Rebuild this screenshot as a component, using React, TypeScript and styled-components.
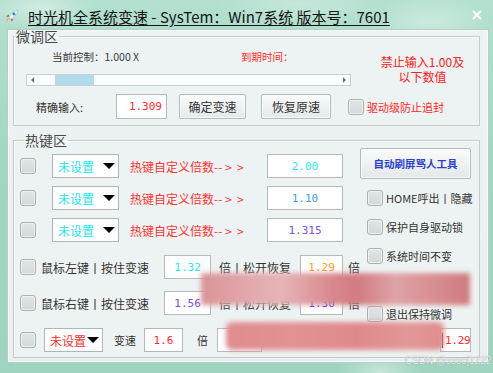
import React from "react";
import styled, { createGlobalStyle, css } from "styled-components";

const GlobalStyle = createGlobalStyle`
  html, body {
    margin: 0;
    padding: 0;
    width: 493px;
    height: 373px;
    overflow: hidden;
  }
  * {
    box-sizing: border-box;
  }
`;

const CJK = `"Noto Sans CJK SC", "Noto Sans", sans-serif`;
const MONO = `"DejaVu Sans Mono", "Liberation Mono", monospace`;

const App = () => {
  return (
    <Window>
      <GlobalStyle />
      <TitleBar>
        <AppIcon viewBox="0 0 16 16" width="14" height="14">
          <path d="M5.2 8.6 L1.6 9.2 L3.6 6.4 Z" fill="#e6393c" />
          <path d="M7.4 10.8 L6.8 14.4 L9.6 12.4 Z" fill="#e6393c" />
          <path d="M4.6 11.4 L1.2 14.8 L2.6 10.6 Z" fill="#f4a21f" />
          <path
            d="M4.6 11.4 C5 7.5 9 2.2 14.6 1.4 C13.8 7 8.5 11 4.6 11.4 Z"
            fill="#f4fbff"
            stroke="#8cc0de"
            strokeWidth="0.8"
          />
          <circle cx="10.2" cy="5.8" r="1.7" fill="#2b86d2" />
        </AppIcon>
        <TitleText>时光机全系统变速 - SysTem：Win7系统 版本号：7601</TitleText>
        <CloseButton viewBox="0 0 10 10" width="10" height="10">
          <path d="M1 1 L9 9 M9 1 L1 9" stroke="#fff" strokeWidth="2" />
        </CloseButton>
      </TitleBar>

      <Panel>
        <Group>
          <GroupLabel $indent={1} $lh={10}>微调区</GroupLabel>
          <FineBody>
            <FineTop>
              <FineLeft>
                <InfoRow>
                  <InfoText $w={189}>当前控制：1.000 X</InfoText>
                  <InfoText $red>到期时间：</InfoText>
                </InfoRow>
                <ScrollTrack>
                  <ScrollEnd>
                    <Arrow $dir="left" />
                  </ScrollEnd>
                  <ScrollThumb />
                  <ScrollEnd $right>
                    <Arrow $dir="right" />
                  </ScrollEnd>
                </ScrollTrack>
              </FineLeft>
              <Warning>
                <span>禁止输入1.00及</span>
                <span>以下数值</span>
              </Warning>
            </FineTop>
            <ActionRow>
              <FieldLabel>精确输入:</FieldLabel>
              <NumBox $w={51} $h={25} $color="#ff2b2b" $right>
                1.309
              </NumBox>
              <PushButton $w={67} $ml={12}>确定变速</PushButton>
              <PushButton $w={70} $ml={15}>恢复原速</PushButton>
              <Check $ml={17} />
              <CheckLabel $red>驱动级防止追封</CheckLabel>
            </ActionRow>
          </FineBody>
        </Group>

        <Group $top={7}>
          <GroupLabel $indent={10} $lh={14}>热键区</GroupLabel>
          <HotBody>
            <HotGrid>
              <LeftCol>
                <HotRow>
                  <Check />
                  <Combo $w={67} $ml={16} $color="#1ee6ef">
                    未设置
                    <ComboArrow />
                  </Combo>
                  <RedText>热键自定义倍数--&nbsp;&gt;&nbsp;&nbsp;&gt;</RedText>
                  <NumBox $w={76} $h={24} $color="#2aeef4">2.00</NumBox>
                </HotRow>
                <HotRow>
                  <Check />
                  <Combo $w={67} $ml={16} $color="#1ee6ef">
                    未设置
                    <ComboArrow />
                  </Combo>
                  <RedText>热键自定义倍数--&nbsp;&gt;&nbsp;&nbsp;&gt;</RedText>
                  <NumBox $w={76} $h={24} $color="#3d9ff0">1.10</NumBox>
                </HotRow>
                <HotRow>
                  <Check />
                  <Combo $w={67} $ml={16} $color="#1ee6ef">
                    未设置
                    <ComboArrow />
                  </Combo>
                  <RedText>热键自定义倍数--&nbsp;&gt;&nbsp;&nbsp;&gt;</RedText>
                  <NumBox $w={76} $h={24} $color="#7458dc">1.315</NumBox>
                </HotRow>
                <MouseRow $first>
                  <Check />
                  <RowText $ml={5}>鼠标左键丨按住变速</RowText>
                  <NumBox $w={47} $h={24} $ml={15} $color="#1ee8f2">1.32</NumBox>
                  <RowText $ml={8}>倍丨松开恢复</RowText>
                  <NumBox $w={43} $h={24} $ml={9} $color="#ff9a26">1.29</NumBox>
                  <RowText $ml={5}>倍</RowText>
                </MouseRow>
                <MouseRow>
                  <Check />
                  <RowText $ml={5}>鼠标右键丨按住变速</RowText>
                  <NumBox $w={47} $h={24} $ml={15} $color="#6f4fe6">1.56</NumBox>
                  <RowText $ml={8}>倍丨松开恢复</RowText>
                  <NumBox $w={43} $h={24} $ml={9} $color="#2430ff">1.30</NumBox>
                  <RowText $ml={5}>倍</RowText>
                </MouseRow>
              </LeftCol>

              <RightCol>
                <ToolButton>自动刷屏骂人工具</ToolButton>
                <SideCheck $first>
                  <Check />
                  <CheckLabel>HOME呼出丨隐藏</CheckLabel>
                </SideCheck>
                <SideCheck>
                  <Check />
                  <CheckLabel>保护自身驱动锁</CheckLabel>
                </SideCheck>
                <SideCheck>
                  <Check />
                  <CheckLabel>系统时间不变</CheckLabel>
                </SideCheck>
                <SideCheck />
                <SideCheck>
                  <Check />
                  <CheckLabel>退出保持微调</CheckLabel>
                </SideCheck>
              </RightCol>
            </HotGrid>

            <BottomRow>
              <Check />
              <Combo $w={59} $ml={8} $color="#ff2b2b">
                未设置
                <ComboArrow />
              </Combo>
              <RowText $ml={11} $small>变速</RowText>
              <NumBox $w={39} $h={24} $ml={8} $color="#ff2b2b">1.6</NumBox>
              <RowText $ml={14} $small>倍</RowText>
              <NumBox $w={45} $h={24} $ml={9} $color="#ff2b2b" />
              <Spacer />
              <NumBox $w={31} $h={24} $color="#ff2b2b" $caret>
                1.29
              </NumBox>
            </BottomRow>
          </HotBody>
        </Group>
      </Panel>

      <Smudge $variant="upper" />
      <Smudge $variant="lower" />
      <Watermark>CSDN @sssej1222</Watermark>
    </Window>
  );
};

export default App;

const Window = styled.div`
  position: relative;
  width: 493px;
  height: 373px;
  overflow: hidden;
  font-family: ${CJK};
  color: #333;
  background:
    radial-gradient(ellipse 90px 40px at 430px 22px, rgba(255, 255, 255, 0.35), transparent 70%),
    radial-gradient(ellipse 120px 30px at 300px 4px, rgba(255, 255, 255, 0.25), transparent 70%),
    radial-gradient(ellipse 80px 30px at 40px 8px, rgba(255, 255, 255, 0.4), transparent 70%),
    radial-gradient(ellipse 60px 30px at 380px 372px, rgba(255, 255, 255, 0.4), transparent 70%),
    linear-gradient(180deg, #b3e0cf 0%, #a2d8c3 40%, #9fd5c0 100%);
`;

const TitleBar = styled.div`
  height: 30px;
  display: flex;
  align-items: center;
  padding: 2px 0 0 5px;
`;

const AppIcon = styled.svg`
  flex: none;
  margin-right: 9px;
`;

const TitleText = styled.div`
  font-size: 15px;
  line-height: 17px;
  color: #151515;
  text-decoration: underline;
  text-underline-offset: 2px;
  white-space: nowrap;
`;

const CloseButton = styled.svg`
  margin-left: auto;
  margin-right: 11px;
  margin-top: -2px;
`;

const Panel = styled.div`
  margin-left: 8px;
  width: 480px;
  height: 332px;
  padding: 0 7px 0 4px;
  background: linear-gradient(180deg, #edf3f2 0%, #e9f0ef 100%);
  border: 1px solid #f7fbfa;
  box-shadow: 0 0 0 1px #b7cdc6;
`;

const Group = styled.fieldset<{ $top?: number }>`
  margin: ${(p) => p.$top || 0}px 0 0 0;
  padding: 0;
  min-inline-size: 0;
  border: 1px solid #c3cccb;
  box-shadow: inset 1px 1px 0 #f8fbfb;
  background: #edf3f2;
`;

const GroupLabel = styled.legend<{ $indent: number; $lh: number }>`
  margin-left: ${(p) => p.$indent}px;
  padding: 0 1px;
  font-size: 14px;
  line-height: ${(p) => p.$lh}px;
  color: #4a4a4a;
`;

const FineBody = styled.div`
  padding: 7px 0 6px 12px;
`;

const FineTop = styled.div`
  display: flex;
`;

const FineLeft = styled.div`
  width: 325px;
  flex: none;
`;

const InfoRow = styled.div`
  height: 16px;
  display: flex;
  align-items: center;
  padding-left: 26px;
`;

const InfoText = styled.span<{ $w?: number; $red?: boolean }>`
  font-size: 10.5px;
  width: ${(p) => (p.$w ? `${p.$w}px` : "auto")};
  color: ${(p) => (p.$red ? "#ff3030" : "#3a3a3a")};
  white-space: nowrap;
`;

const ScrollTrack = styled.div`
  margin-top: 10px;
  height: 12px;
  display: flex;
  background: #fbfdfd;
  border: 1px solid #c9d2d3;
`;

const ScrollEnd = styled.div<{ $right?: boolean }>`
  width: ${(p) => (p.$right ? 10 : 28)}px;
  display: flex;
  align-items: center;
  justify-content: ${(p) => (p.$right ? "flex-end" : "flex-start")};
  padding: 0 4px;
  ${(p) =>
    p.$right &&
    css`
      margin-left: auto;
    `}
`;

const Arrow = styled.span<{ $dir: "left" | "right" }>`
  width: 0;
  height: 0;
  border-top: 3px solid transparent;
  border-bottom: 3px solid transparent;
  ${(p) =>
    p.$dir === "left"
      ? css`
          border-right: 3px solid #6d7474;
        `
      : css`
          border-left: 3px solid #6d7474;
        `}
`;

const ScrollThumb = styled.div`
  width: 39px;
  background: #b2dbeb;
`;

const Warning = styled.div`
  width: 114px;
  margin-left: 15px;
  padding-top: 6px;
  display: flex;
  flex-direction: column;
  align-items: center;
  font-size: 12px;
  line-height: 15px;
  color: #ff2020;
  white-space: nowrap;
`;

const ActionRow = styled.div`
  margin-top: 8px;
  height: 25px;
  display: flex;
  align-items: center;
`;

const FieldLabel = styled.span`
  width: 90px;
  padding-left: 10px;
  font-size: 11px;
  color: #333;
`;

const NumBox = styled.div<{
  $w: number;
  $h: number;
  $ml?: number;
  $color: string;
  $right?: boolean;
  $caret?: boolean;
}>`
  flex: none;
  width: ${(p) => p.$w}px;
  height: ${(p) => p.$h}px;
  margin-left: ${(p) => p.$ml || 0}px;
  display: flex;
  align-items: center;
  justify-content: ${(p) => (p.$right ? "flex-end" : "center")};
  padding: 0 ${(p) => (p.$right ? 4 : 0)}px;
  background: #fff;
  border: 1px solid #b4b9ba;
  font-family: ${MONO};
  font-size: 11px;
  color: ${(p) => p.$color};
  white-space: nowrap;
  overflow: hidden;
  ${(p) =>
    p.$caret &&
    css`
      justify-content: flex-start;
      padding-left: 1px;
      letter-spacing: -0.3px;
      &::before {
        content: "";
        width: 1px;
        height: 15px;
        margin-right: 2px;
        background: #111;
        flex: none;
      }
    `}
`;

const buttonFace = css`
  background: linear-gradient(180deg, #fbfcfc 0%, #eef1f1 55%, #e3e8e8 100%);
  border: 1px solid #b3bbbb;
  border-radius: 2px;
  box-shadow: inset 0 0 0 1px rgba(255, 255, 255, 0.7);
`;

const PushButton = styled.div<{ $w: number; $ml: number }>`
  ${buttonFace};
  width: ${(p) => p.$w}px;
  height: 25px;
  margin-left: ${(p) => p.$ml}px;
  display: flex;
  align-items: center;
  justify-content: center;
  font-size: 12px;
  color: #333;
`;

const Check = styled.span<{ $ml?: number }>`
  flex: none;
  display: inline-block;
  width: 16px;
  height: 16px;
  margin-left: ${(p) => p.$ml || 0}px;
  border: 1px solid #a9b1b2;
  border-radius: 3px;
  background: linear-gradient(180deg, #e3e6e7 0%, #d3d7d8 100%);
  box-shadow: inset 0 0 0 1px #eef0f0;
`;

const CheckLabel = styled.span<{ $red?: boolean }>`
  margin-left: 3px;
  font-size: 11px;
  color: ${(p) => (p.$red ? "#ff2a2a" : "#333")};
  white-space: nowrap;
`;

const HotBody = styled.div`
  padding: 1px 8px 5px 6px;
`;

const HotGrid = styled.div`
  display: grid;
  grid-template-columns: 323px 111px;
  column-gap: 17px;
`;

const LeftCol = styled.div`
  padding-top: 2px;
`;

const HotRow = styled.div`
  height: 32px;
  display: flex;
  align-items: center;
`;

const Combo = styled.div<{ $w: number; $ml: number; $color: string }>`
  flex: none;
  width: ${(p) => p.$w}px;
  height: 24px;
  margin-left: ${(p) => p.$ml}px;
  display: flex;
  align-items: center;
  padding: 0 3px 0 5px;
  background: #fff;
  border: 1px solid #b0b5b6;
  font-size: 12px;
  color: ${(p) => p.$color};
`;

const ComboArrow = styled.span`
  margin-left: auto;
  width: 0;
  height: 0;
  border-left: 6px solid transparent;
  border-right: 6px solid transparent;
  border-top: 6px solid #000;
`;

const RedText = styled.span`
  flex: 1;
  margin-left: 11px;
  font-size: 12px;
  color: #ff3434;
  white-space: nowrap;
`;

const MouseRow = styled.div<{ $first?: boolean }>`
  height: 36px;
  margin-top: ${(p) => (p.$first ? 3 : 0)}px;
  display: flex;
  align-items: center;
  white-space: nowrap;
`;

const RowText = styled.span<{ $ml: number; $small?: boolean }>`
  flex: none;
  margin-left: ${(p) => p.$ml}px;
  font-size: ${(p) => (p.$small ? 11 : 12)}px;
  color: #333;
`;

const RightCol = styled.div`
  display: flex;
  flex-direction: column;
`;

const ToolButton = styled.div`
  ${buttonFace};
  height: 31px;
  display: flex;
  align-items: center;
  justify-content: center;
  font-size: 10.5px;
  font-weight: 700;
  color: #2b3fd6;
`;

const SideCheck = styled.div<{ $first?: boolean }>`
  height: 29px;
  margin-top: ${(p) => (p.$first ? 4 : 0)}px;
  display: flex;
  align-items: center;
  padding-left: 7px;
`;

const BottomRow = styled.div`
  height: 24px;
  display: flex;
  align-items: center;
`;

const Spacer = styled.div`
  flex: 1;
`;

const Smudge = styled.div<{ $variant: "upper" | "lower" }>`
  position: absolute;
  filter: blur(2.5px);
  ${(p) =>
    p.$variant === "upper"
      ? css`
          left: 201px;
          top: 273px;
          width: 269px;
          height: 32px;
          background: linear-gradient(
            90deg,
            #d99498 0%,
            #e2a9ad 18%,
            #e6b4b7 30%,
            #d98a8f 48%,
            #d27b80 58%,
            #dea3a7 72%,
            #d98f93 86%,
            #cf7a7f 100%
          );
        `
      : css`
          left: 226px;
          top: 322px;
          width: 218px;
          height: 28px;
          border-radius: 6px;
          background: linear-gradient(
            90deg,
            #df8c8d 0%,
            #e29293 30%,
            #de8a8b 60%,
            #e39798 85%,
            #e08c8d 100%
          );
        `}
`;

const Watermark = styled.div`
  position: absolute;
  left: 405px;
  top: 355px;
  font-family: "Liberation Sans", Arial, sans-serif;
  font-size: 10px;
  color: rgba(255, 255, 255, 0.85);
  text-shadow: 0 0 1px rgba(90, 110, 105, 0.8);
  white-space: nowrap;
`;
